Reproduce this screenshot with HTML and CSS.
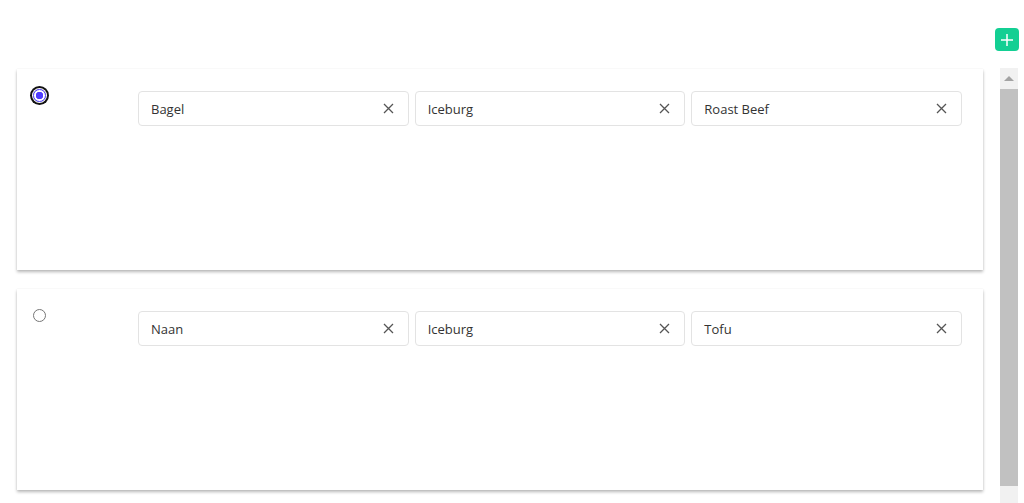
FILE: index.html
```html
<!DOCTYPE html>
<html lang="en">
<head>
    <meta charset="UTF-8">
    <meta name="viewport" content="width=device-width, initial-scale=1.0">
    <title>Sandwich Builder</title>
    <link rel="stylesheet" href="styles.css">
</head>
<body>
    <div class="toolbar">
        <button class="add-btn" title="Add sandwich">
            <svg width="14" height="14" viewBox="0 0 14 14"><path d="M7 1v12M1 7h12" stroke="white" stroke-width="1.5" fill="none"/></svg>
        </button>
    </div>

    <div class="main">
        <div class="list">
            <!-- Sandwich 1 -->
            <div class="card">
                <input type="radio" name="pick" class="pick focused" checked>
                <div class="fields">
                    <div class="field"><span>Bagel</span><button class="clear"><svg width="11" height="11" viewBox="0 0 11 11"><path d="M1 1l9 9M10 1l-9 9" stroke="#555" stroke-width="1.3"/></svg></button></div>
                    <div class="field"><span>Iceburg</span><button class="clear"><svg width="11" height="11" viewBox="0 0 11 11"><path d="M1 1l9 9M10 1l-9 9" stroke="#555" stroke-width="1.3"/></svg></button></div>
                    <div class="field"><span>Roast Beef</span><button class="clear"><svg width="11" height="11" viewBox="0 0 11 11"><path d="M1 1l9 9M10 1l-9 9" stroke="#555" stroke-width="1.3"/></svg></button></div>
                </div>
            </div>

            <!-- Sandwich 2 -->
            <div class="card">
                <input type="radio" name="pick" class="pick">
                <div class="fields">
                    <div class="field"><span>Naan</span><button class="clear"><svg width="11" height="11" viewBox="0 0 11 11"><path d="M1 1l9 9M10 1l-9 9" stroke="#555" stroke-width="1.3"/></svg></button></div>
                    <div class="field"><span>Iceburg</span><button class="clear"><svg width="11" height="11" viewBox="0 0 11 11"><path d="M1 1l9 9M10 1l-9 9" stroke="#555" stroke-width="1.3"/></svg></button></div>
                    <div class="field"><span>Tofu</span><button class="clear"><svg width="11" height="11" viewBox="0 0 11 11"><path d="M1 1l9 9M10 1l-9 9" stroke="#555" stroke-width="1.3"/></svg></button></div>
                </div>
            </div>
        </div>

        <div class="scrollbar">
            <div class="arrow"></div>
            <div class="thumb"></div>
        </div>
    </div>
</body>
</html>
```

FILE: styles.css
```css
body {
    font-family: "Open Sans", "Noto Sans", sans-serif;
    background-color: white;
    color: #333;
    margin: 0;
    height: 503px;
    overflow: hidden;
}
.toolbar {
    display: flex;
    justify-content: flex-end;
    padding: 28px 5px 0 0;
    height: 40px;
}
.add-btn {
    width: 24px;
    height: 23px;
    border: none;
    border-radius: 4px;
    background-color: #13cf93;
    display: flex;
    align-items: center;
    justify-content: center;
    padding: 0;
    cursor: pointer;
}
.main {
    display: flex;
    align-items: flex-start;
    padding-left: 17px;
}
.list {
    width: 966px;
    padding-top: 1px;
}
.card {
    background: white;
    height: 201px;
    margin-bottom: 19px;
    box-shadow: 0 2px 3px rgba(0, 0, 0, 0.28), 0 0 1px rgba(0, 0, 0, 0.08);
    display: flex;
    align-items: flex-start;
    box-sizing: border-box;
    padding: 19px 21px 0 16px;
}
/* hand-drawn radio so the focus ring stays round */
.pick {
    appearance: none;
    margin: 0;
    width: 13px;
    height: 13px;
    border: 1px solid #767676;
    border-radius: 50%;
    background: white;
    flex-shrink: 0;
    margin-top: 1px;
}
.pick:checked {
    border: 1px solid #4f3cff;
    background: radial-gradient(circle, #4f3cff 0 3.5px, white 4px);
}
.pick.focused {
    box-shadow: 0 0 0 1px white, 0 0 0 3px #111;
}
.fields {
    flex: 1;
    display: flex;
    gap: 6px;
    margin: 3px 0 0 92px;
}
.field {
    flex: 1;
    height: 35px;
    border: 1px solid #e3e3e3;
    border-radius: 4px;
    box-sizing: border-box;
    display: flex;
    align-items: center;
    justify-content: space-between;
    padding: 0 14px 0 12px;
    font-size: 13px;
    color: #333;
}
.clear {
    border: none;
    background: none;
    padding: 0;
    display: flex;
    cursor: pointer;
}
.scrollbar {
    margin-left: 17px;
    width: 18px;
    height: 435px;
    background: #f1f1f1;
    display: flex;
    flex-direction: column;
    align-items: center;
}
.arrow {
    margin-top: 8px;
    width: 0;
    height: 0;
    border-left: 5px solid transparent;
    border-right: 5px solid transparent;
    border-bottom: 5px solid #a3a3a3;
}
.thumb {
    margin-top: 8px;
    width: 18px;
    height: 397px;
    background: #c1c1c1;
}
```
